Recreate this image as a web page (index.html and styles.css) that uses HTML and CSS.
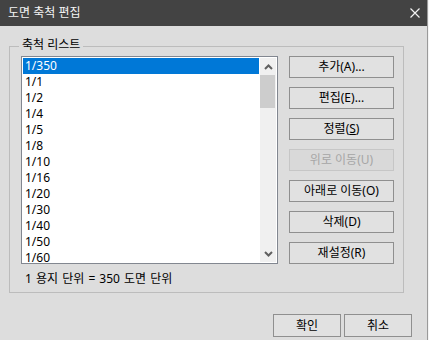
FILE: index.html
```html
<!DOCTYPE html>
<html lang="ko">
<head>
  <meta charset="UTF-8" />
  <title>도면 축척 편집</title>
  <link rel="stylesheet" href="styles.css">
</head>
<body>
  <div class="window">
    <!-- Title bar -->
    <div class="titlebar">
      <span class="title">도면 축척 편집</span>
      <svg class="close" width="10" height="10" viewBox="0 0 10 10">
        <path d="M0.5 0.5 L9.5 9.5 M9.5 0.5 L0.5 9.5" stroke="#f2f2f2" stroke-width="1.2" fill="none" />
      </svg>
    </div>

    <div class="client">
      <!-- Scale list group -->
      <div class="group">
        <span class="legend">축척 리스트</span>
        <div class="group-body">
          <div class="listbox">
            <ul class="items">
              <li class="selected">1/350</li>
              <li>1/1</li>
              <li>1/2</li>
              <li>1/4</li>
              <li>1/5</li>
              <li>1/8</li>
              <li>1/10</li>
              <li>1/16</li>
              <li>1/20</li>
              <li>1/30</li>
              <li>1/40</li>
              <li>1/50</li>
              <li>1/60</li>
            </ul>
            <div class="scrollbar">
              <div class="arrow">
                <svg width="9" height="6" viewBox="0 0 9 6"><path d="M1 5 L4.5 1.5 L8 5" stroke="#606060" stroke-width="2" fill="none" /></svg>
              </div>
              <div class="track"><div class="thumb"></div></div>
              <div class="arrow">
                <svg width="9" height="6" viewBox="0 0 9 6"><path d="M1 1 L4.5 4.5 L8 1" stroke="#606060" stroke-width="2" fill="none" /></svg>
              </div>
            </div>
          </div>
          <div class="side-buttons">
            <button class="btn">추가(A)...</button>
            <button class="btn">편집(E)...</button>
            <button class="btn">정렬(<u>S</u>)</button>
            <button class="btn" disabled>위로 이동(U)</button>
            <button class="btn">아래로 이동(O)</button>
            <button class="btn">삭제(D)</button>
            <button class="btn">재설정(R)</button>
          </div>
        </div>
        <p class="ratio">1 용지 단위 = 350 도면 단위</p>
      </div>

      <!-- Dialog buttons -->
      <div class="footer">
        <button class="btn dialog-btn">확인</button>
        <button class="btn dialog-btn">취소</button>
      </div>
    </div>
  </div>
</body>
</html>
```

FILE: styles.css
```css
body {
  margin: 0;
  background: #f4f4f4;
  font-family: "Noto Sans", "Noto Sans CJK KR", sans-serif;
  font-size: 12px;
  color: #000;
}
.window {
  width: 428px;
  height: 340px;
  box-sizing: border-box;
  border-right: 1px solid #9a9a9a;
  background: #dddddd;
  overflow: hidden;
}
.titlebar {
  height: 26px;
  background: #434343;
  color: #f4f4f4;
  display: flex;
  align-items: center;
  justify-content: space-between;
  padding: 0 7px 0 8px;
}
.title {
  line-height: 16px;
}
.client {
  padding: 20px 0 0 9px;
}
.group {
  position: relative;
  width: 395px;
  box-sizing: border-box;
  border: 1px solid #bcbcbc;
  padding: 9px 9px 5px 11px;
}
.legend {
  position: absolute;
  top: -10px;
  left: 9px;
  padding: 0 3px;
  line-height: 16px;
  background: #dddddd;
}
.group-body {
  display: flex;
  gap: 11px;
}
.listbox {
  width: 257px;
  height: 208px;
  box-sizing: border-box;
  border: 1px solid #828790;
  background: #fff;
  padding: 1px;
  display: flex;
}
.items {
  flex: 1;
  list-style: none;
  margin: 0;
  padding: 0;
  overflow: hidden;
}
.items li {
  height: 16px;
  line-height: 16px;
  padding-left: 2px;
}
.items .selected {
  background: #0078d7;
  color: #fff;
}
.scrollbar {
  width: 16px;
  border-left: 1px solid #fff;
  background: #f0f0f0;
  display: flex;
  flex-direction: column;
}
.arrow {
  height: 17px;
  display: flex;
  align-items: center;
  justify-content: center;
}
.track {
  flex: 1;
}
.thumb {
  height: 33px;
  margin-right: 1px;
  background: #cdcdcd;
}
.side-buttons {
  display: flex;
  flex-direction: column;
  gap: 9px;
}
.btn {
  width: 105px;
  height: 22px;
  box-sizing: border-box;
  border: 1px solid #8f8f8f;
  background: #e1e1e1;
  font-family: inherit;
  font-size: 12px;
  color: #000;
  padding: 0;
  line-height: 16px;
}
.btn:disabled {
  border-color: #c6c6c6;
  background: #d9d9d9;
  color: #a6a6a6;
}
.ratio {
  margin: 7px 0 0 4px;
  line-height: 16px;
  word-spacing: 1px;
}
.footer {
  display: flex;
  justify-content: flex-end;
  gap: 3px;
  padding-right: 15px;
  margin-top: 21px;
}
.dialog-btn {
  width: 68px;
  height: 23px;
}
```
